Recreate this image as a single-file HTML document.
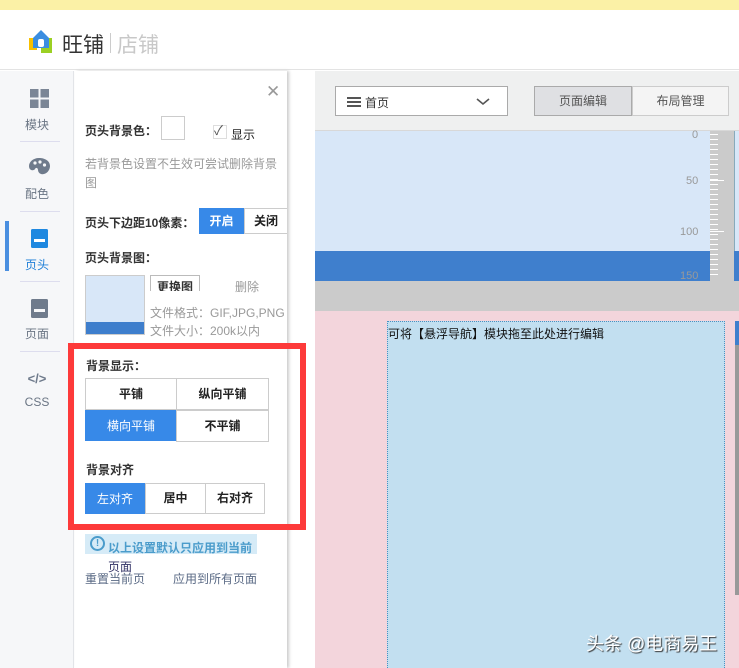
<!DOCTYPE html>
<html><head><meta charset="utf-8"><style>
*{margin:0;padding:0;box-sizing:border-box}
body{width:739px;height:668px;overflow:hidden;position:relative;background:#fff;font-family:"Liberation Sans","Noto Sans CJK SC",sans-serif;font-size:12px;color:#333}
.a{position:absolute}
.b{font-weight:bold}
.btn{position:absolute;border:1px solid #ccc;background:#fff;text-align:center;font-weight:bold;color:#222;font-size:12px}
.on{background:#3789e8;color:#fff;border-color:#3789e8;font-weight:normal}
.nav{position:absolute;left:0;width:74px;text-align:center;color:#6a7584;font-size:12px}
</style></head><body>
<div class="a" style="left:0;top:0;width:739px;height:10px;background:#fbf1a6"></div>
<div class="a" style="left:0;top:10px;width:739px;height:60px;background:#fff;border-bottom:1px solid #e3e3e3"></div>
<!-- logo -->
<svg class="a" style="left:28px;top:28px" width="26" height="26" viewBox="0 0 26 26"><rect x="1" y="10" width="8" height="12" fill="#f8c000"/><rect x="13" y="10" width="11" height="15" fill="#9bd023"/><path d="M5 10 L13 2 L21 10 L21 20 L5 20Z" fill="#3a8de0"/><rect x="10" y="11" width="6" height="8" fill="#fff" rx="2"/></svg>
<div class="a" style="left:62px;top:29px;font-size:21px;color:#333">旺铺</div>
<div class="a" style="left:110px;top:33px;width:1px;height:20px;background:#ccc"></div>
<div class="a" style="left:117px;top:29px;font-size:21px;color:#c8c8c8">店铺</div>
<!-- sidebar -->
<div class="a" style="left:0;top:71px;width:74px;height:597px;background:#f6f7f9;border-right:1px solid #e2e4e8"></div>
<svg class="a" style="left:30px;top:89px" width="19" height="19"><rect width="8.5" height="8.5" fill="#7b8696"/><rect x="10.5" width="8.5" height="8.5" fill="#7b8696"/><rect y="10.5" width="8.5" height="8.5" fill="#7b8696"/><rect x="10.5" y="10.5" width="8.5" height="8.5" fill="#7b8696"/></svg>
<div class="nav" style="top:116px">模块</div>
<div class="a" style="left:20px;top:141px;width:40px;height:1px;background:#dde"></div>
<svg class="a" style="left:29px;top:158px" width="21" height="17"><path d="M10 0C4 0 0 4 0 8c0 5 5 5 6 3s3-1 3 1 2 5 6 4 6-5 6-8C21 3 16 0 10 0z" fill="#6f7b8c"/><circle cx="6" cy="5" r="1.6" fill="#f6f7f9"/><circle cx="11" cy="4" r="1.6" fill="#f6f7f9"/><circle cx="15.5" cy="7" r="1.6" fill="#f6f7f9"/></svg>
<div class="nav" style="top:185px">配色</div>
<div class="a" style="left:20px;top:211px;width:40px;height:1px;background:#dde"></div>
<div class="a" style="left:5px;top:221px;width:4px;height:50px;background:#4a8fe0"></div>
<svg class="a" style="left:31px;top:229px" width="17" height="19"><rect width="17" height="19" rx="1.5" fill="#1e88e0"/><rect x="3" y="10" width="11" height="3" fill="#fff"/></svg>
<div class="nav" style="top:256px;color:#1e7fd8">页头</div>
<div class="a" style="left:20px;top:281px;width:40px;height:1px;background:#dde"></div>
<svg class="a" style="left:31px;top:299px" width="17" height="19"><rect width="17" height="19" rx="1.5" fill="#6f7b8c"/><rect x="3" y="10" width="11" height="3" fill="#f6f7f9"/></svg>
<div class="nav" style="top:325px">页面</div>
<div class="a" style="left:20px;top:351px;width:40px;height:1px;background:#dde"></div>
<div class="nav b" style="top:371px;font-size:13px;color:#6f7b8c">&lt;/&gt;</div>
<div class="nav" style="top:395px">CSS</div>
<!-- panel -->
<div class="a" style="left:75px;top:71px;width:212px;height:597px;background:#fff;box-shadow:2px 0 3px #ccc"></div>
<div class="a" style="left:266px;top:82px;font-size:17px;color:#999">✕</div>
<div class="a b" style="left:85px;top:122px">页头背景色：</div>
<div class="a" style="left:161px;top:116px;width:24px;height:24px;border:1px solid #ccc"></div>
<div class="a" style="left:213px;top:125px;width:14px;height:14px;border:1px solid #ddd;font-size:13px;line-height:10px;color:#555">✓</div>
<div class="a" style="left:231px;top:126px;font-size:12px;color:#222">显示</div>
<div class="a" style="left:85px;top:155px;width:195px;line-height:19px;color:#999">若背景色设置不生效可尝试删除背景图</div>
<div class="a b" style="left:85px;top:214px">页头下边距10像素：</div>
<div class="btn on" style="left:199px;top:208px;width:45px;height:26px;line-height:24px;font-weight:bold">开启</div>
<div class="btn" style="left:244px;top:208px;width:43px;height:26px;line-height:24px;border-right:none">关闭</div>
<div class="a b" style="left:85px;top:249px">页头背景图：</div>
<div class="a" style="left:85px;top:275px;width:60px;height:60px;background:#d8e7f8;border:1px solid #ccc"></div>
<div class="a" style="left:86px;top:322px;width:58px;height:12px;background:#3e7ecc"></div>
<div class="a" style="left:150px;top:275px;width:50px;height:16px;border:1px solid #bbb;border-bottom:none;overflow:hidden;text-align:center;font-weight:bold;line-height:22px;color:#333">更换图</div>
<div class="a" style="left:235px;top:278px;color:#999">删除</div>
<div class="a" style="left:150px;top:304px;color:#999">文件格式：GIF,JPG,PNG</div>
<div class="a" style="left:150px;top:322px;color:#999">文件大小：200k以内</div>
<div class="a b" style="left:86px;top:357px">背景显示：</div>
<div class="btn" style="left:85px;top:378px;width:92px;height:32px;line-height:30px">平铺</div>
<div class="btn" style="left:176px;top:378px;width:93px;height:32px;line-height:30px">纵向平铺</div>
<div class="btn on" style="left:85px;top:410px;width:92px;height:31px;line-height:31px">横向平铺</div>
<div class="btn" style="left:176px;top:410px;width:93px;height:32px;line-height:30px">不平铺</div>
<div class="a b" style="left:86px;top:461px">背景对齐</div>
<div class="btn on" style="left:85px;top:483px;width:60px;height:31px;line-height:31px">左对齐</div>
<div class="btn" style="left:145px;top:483px;width:61px;height:31px;line-height:29px">居中</div>
<div class="btn" style="left:205px;top:483px;width:60px;height:31px;line-height:29px">右对齐</div>
<div class="a" style="left:68px;top:343px;width:238px;height:187px;border:6px solid #fd3a3a"></div>
<div class="a" style="left:85px;top:534px;width:172px;height:20px;background:#d6ebf7"></div>
<div class="a" style="left:90px;top:536px;width:15px;height:15px;border:2px solid #4b9ccb;border-radius:50%;color:#4b9ccb;font-size:10px;line-height:11px;text-align:center;font-weight:bold">!</div>
<div class="a b" style="left:108px;top:539px;color:#4b9ccb">以上设置默认只应用到当前</div>
<div class="a" style="left:108px;top:558px;color:#336">页面</div>
<div class="a" style="left:85px;top:570px;color:#5a6a85">重置当前页</div>
<div class="a" style="left:173px;top:570px;color:#5a6a85">应用到所有页面</div>
<!-- main -->
<div class="a" style="left:315px;top:71px;width:424px;height:60px;background:#eff0f0;border-bottom:1px solid #d8d8d8"></div>
<div class="a" style="left:335px;top:86px;width:173px;height:30px;background:#fff;border:1px solid #aaa"></div>
<div class="a" style="left:347px;top:97px;width:14px;height:2px;background:#555;box-shadow:0 4px #555,0 8px #555"></div>
<div class="a" style="left:365px;top:94px;color:#333">首页</div>
<svg class="a" style="left:476px;top:98px" width="14" height="8"><path d="M1 1l6 5 6-5" stroke="#555" stroke-width="1.6" fill="none"/></svg>
<div class="a" style="left:534px;top:86px;width:98px;height:30px;background:#dfe0e3;border:1px solid #aaa;text-align:center;line-height:28px;color:#555">页面编辑</div>
<div class="a" style="left:632px;top:86px;width:97px;height:30px;background:#f4f4f4;border:1px solid #ccc;text-align:center;line-height:28px;color:#555">布局管理</div>
<div class="a" style="left:315px;top:131px;width:424px;height:180px;background:#cbcbcb"></div>
<div class="a" style="left:315px;top:131px;width:395px;height:120px;background:#d8e7f8"></div>
<div class="a" style="left:315px;top:251px;width:395px;height:30px;background:#3f7fcd"></div>
<div class="a" style="left:734px;top:131px;width:5px;height:120px;background:#d8e7f8;border-left:1px solid #8ab"></div>
<div class="a" style="left:734px;top:251px;width:5px;height:30px;background:#3f7fcd"></div>
<div class="a" style="left:710px;top:134px;width:8px;height:145px;background:repeating-linear-gradient(#fff 0 1px,transparent 1px 5px)"></div>
<div class="a" style="left:710px;top:180px;width:14px;height:1px;background:#fff"></div>
<div class="a" style="left:710px;top:231px;width:14px;height:1px;background:#fff"></div>
<div class="a" style="left:692px;top:129px;color:#999;font-size:11px">0</div>
<div class="a" style="left:686px;top:175px;color:#999;font-size:11px">50</div>
<div class="a" style="left:680px;top:226px;color:#999;font-size:11px">100</div>
<div class="a" style="left:680px;top:270px;color:#999;font-size:11px;height:11px;overflow:hidden">150</div>
<div class="a" style="left:315px;top:311px;width:424px;height:357px;background:#f3d5dc"></div>
<div class="a" style="left:387px;top:321px;width:338px;height:347px;background:#c2dff0;border:1px dotted #4a90c0;border-bottom:none"></div>
<div class="a" style="left:388px;top:325px;color:#111">可将【悬浮导航】模块拖至此处进行编辑</div>
<div class="a" style="left:735px;top:321px;width:4px;height:24px;background:#3f7fcd"></div>
<div class="a" style="left:735px;top:345px;width:4px;height:250px;background:#999"></div>
<div class="a" style="left:586px;top:630px;font-size:18px;color:#fff;text-shadow:1px 1px 1px #333">头条 @电商易王</div>
</body></html>
